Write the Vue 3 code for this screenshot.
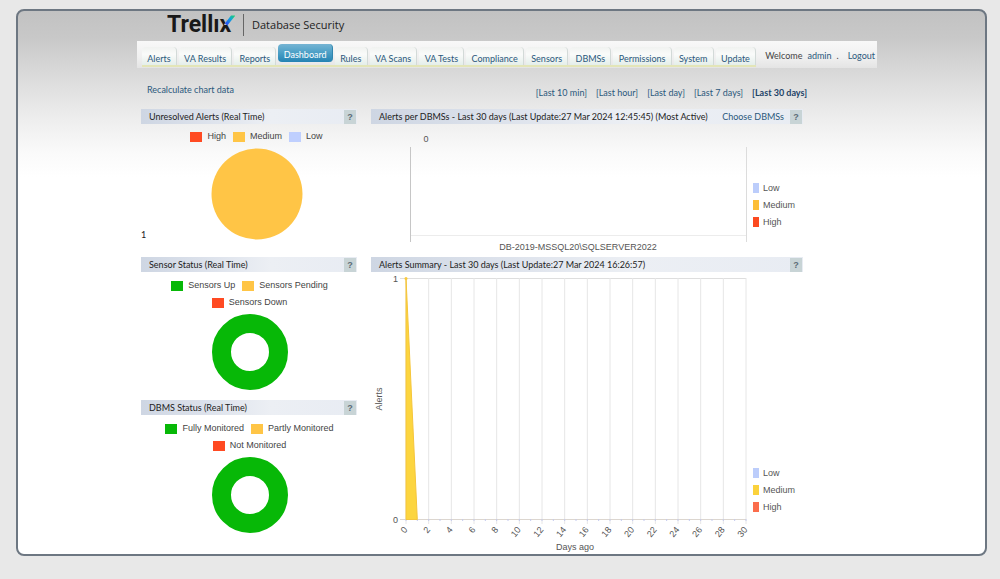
<script setup>
const tabs = ['Alerts', 'VA Results', 'Reports', 'Dashboard', 'Rules', 'VA Scans', 'VA Tests', 'Compliance', 'Sensors', 'DBMSs', 'Permissions', 'System', 'Update']
const ranges = ['Last 10 min', 'Last hour', 'Last day', 'Last 7 days', 'Last 30 days']
const activeTab = 'Dashboard'
const activeRange = 'Last 30 days'

const donuts = [
  {
    title: 'Sensor Status (Real Time)',
    rows: [
      [{ name: 'Sensors Up', tone: 'green' }, { name: 'Sensors Pending', tone: 'amber' }],
      [{ name: 'Sensors Down', tone: 'red' }],
    ],
  },
  {
    title: 'DBMS Status (Real Time)',
    rows: [
      [{ name: 'Fully Monitored', tone: 'green' }, { name: 'Partly Monitored', tone: 'amber' }],
      [{ name: 'Not Monitored', tone: 'red' }],
    ],
  },
]
const severities = [
  { name: 'High', tone: 'red' },
  { name: 'Medium', tone: 'amber' },
  { name: 'Low', tone: 'blue' },
]

// 31 daily ticks, spread between the plot's left and right edges
const days = Array.from({ length: 31 }, (_, day) => ({ day, x: 35 + (day * 34) / 3 }))
const labelled = days.filter((d) => d.day % 2 === 0)
const barLegend = [
  { name: 'Low', fill: '#bccdfb' },
  { name: 'Medium', fill: '#fdbe38' },
  { name: 'High', fill: '#fc4a20' },
]
const areaLegend = [
  { name: 'Low', fill: '#bccdfb' },
  { name: 'Medium', fill: '#fbd23c' },
  { name: 'High', fill: '#fb6d4c' },
]
</script>

<template>
  <div class="page">
    <div class="frame">
      <div class="content">
        <header class="brand">
          <svg class="logo" viewBox="0 0 68 30" role="img" aria-label="Trellix">
            <defs>
              <linearGradient id="arm" x1="0" y1="1" x2="1" y2="0">
                <stop offset="0.2" stop-color="#2457f5" />
                <stop offset="0.6" stop-color="#12a6d8" />
                <stop offset="1" stop-color="#1bd760" />
              </linearGradient>
            </defs>
            <text class="logo-text" x="0" y="22">Trellıx</text>
            <path class="logo-cut" d="M57 15 L60 9 L65 5 L69 5 L69 10 L63 15 Z" />
            <path d="M57.800 13.500 L64 5.500 L68.300 5.500 L60.300 15.500 Z" fill="url(#arm)" />
          </svg>
          <span class="product">Database Security</span>
        </header>

        <div class="bar">
          <nav class="tabs">
            <a v-for="t in tabs" :key="t" href="#" class="tab" :class="{ active: t === activeTab }">{{ t }}</a>
          </nav>
          <div class="user">
            <span>Welcome</span><a href="#">admin</a><span>.</span><a href="#" class="logout">Logout</a>
          </div>
        </div>

        <div class="tools">
          <a href="#" class="recalc">Recalculate chart data</a>
          <div class="ranges">
            <a v-for="r in ranges" :key="r" href="#" :class="{ chosen: r === activeRange }">[{{ r }}]</a>
          </div>
        </div>

        <main class="board">
          <div class="column">
            <section class="panel first">
              <div class="head"><h2>Unresolved Alerts (Real Time)</h2><button type="button" class="help">?</button></div>
              <div class="pie-box">
                <div class="legend-row">
                  <span v-for="s in severities" :key="s.name" class="key"><i class="swatch" :class="s.tone"></i>{{ s.name }}</span>
                </div>
                <svg class="pie" viewBox="0 0 92 92"><circle cx="46" cy="46" r="45.500" fill="#ffc546" /></svg>
              </div>
              <span class="total">1</span>
            </section>
            <section v-for="d in donuts" :key="d.title" class="panel small">
              <div class="head"><h2>{{ d.title }}</h2><button type="button" class="help">?</button></div>
              <div class="donut-box">
                <div v-for="(row, i) in d.rows" :key="i" class="legend-row">
                  <span v-for="s in row" :key="s.name" class="key"><i class="swatch" :class="s.tone"></i>{{ s.name }}</span>
                </div>
                <svg class="donut" viewBox="0 0 76 76"><circle cx="38" cy="38" r="28.500" fill="none" stroke="#07b807" stroke-width="19" /></svg>
              </div>
            </section>
          </div>

          <div class="column">
            <section class="panel first">
              <div class="head">
                <h2>Alerts per DBMSs - Last 30 days (Last Update:27 Mar 2024 12:45:45) (Most Active)</h2>
                <a href="#" class="choose">Choose DBMSs</a>
                <button type="button" class="help">?</button>
              </div>
              <svg class="chart" viewBox="0 0 432 133">
                <path d="M39.500 23V118" stroke="#c6c6c6" />
                <path d="M375.500 23V118" stroke="#dcdcdc" />
                <path d="M40 111.500H375" stroke="#ececec" />
                <text x="55" y="18" text-anchor="middle">0</text>
                <text x="207" y="126" text-anchor="middle">DB-2019-MSSQL20\SQLSERVER2022</text>
                <g v-for="(l, i) in barLegend" :key="l.name">
                  <rect x="382" :y="59 + i * 17" width="6" height="10" :fill="l.fill" />
                  <text x="392" :y="67 + i * 17">{{ l.name }}</text>
                </g>
              </svg>
            </section>
            <section class="panel">
              <div class="head">
                <h2>Alerts Summary - Last 30 days (Last Update:27 Mar 2024 16:26:57)</h2>
                <button type="button" class="help">?</button>
              </div>
              <svg class="chart" viewBox="0 0 432 281">
                <path d="M29 6.500H375" stroke="#dedede" />
                <path v-for="d in labelled" :key="'g' + d.day" :d="`M${d.x} 6V252`" stroke="#e6e6e6" />
                <path d="M29 247.500H375" stroke="#dcd6cf" />
                <path v-for="d in days" :key="'t' + d.day" :d="`M${d.x} 247V249`" stroke="#c3c9ee" />
                <path d="M35 6L35 247.500H46.300Z" fill="#fcd53f" stroke="#f5c53a" stroke-width="1" />
                <circle cx="35" cy="6.500" r="1.500" fill="#f9c93c" />
                <text x="27" y="10" text-anchor="end">1</text>
                <text x="27" y="251" text-anchor="end">0</text>
                <text v-for="d in labelled" :key="'l' + d.day" :transform="`translate(${d.x + 2} 258) rotate(-50)`" text-anchor="end">{{ d.day }}</text>
                <text transform="translate(11 127) rotate(-90)" text-anchor="middle">Alerts</text>
                <text x="204" y="278" text-anchor="middle">Days ago</text>
                <g v-for="(l, i) in areaLegend" :key="l.name">
                  <rect x="382" :y="196 + i * 17" width="6" height="10" :fill="l.fill" />
                  <text x="392" :y="204 + i * 17">{{ l.name }}</text>
                </g>
              </svg>
            </section>
          </div>
        </main>
      </div>
    </div>
  </div>
</template>

<style>
body {
  background: #e8e8e8;
}
</style>

<style scoped>
.page {
  box-sizing: border-box;
  min-height: 100vh;
  padding: 9px 13px 23px 16px;
  font-family: Lato, "Liberation Sans", sans-serif;
  font-size: 9px;
  line-height: 12px;
  color: #444;
}
.frame {
  box-sizing: border-box;
  min-height: 547px;
  border: 2px solid #6d7782;
  border-radius: 8px;
  background: linear-gradient(#c2c2c2 0, #c8c8c8 26px, #dadada 64px, #ececec 104px, #fafafa 142px, #fff 166px);
  display: grid;
  grid-template-columns: 119fr 740fr 108fr;
}
.content {
  grid-column: 2;
}
a {
  color: #2b587c;
  text-decoration: none;
}
.brand {
  display: flex;
  align-items: center;
  height: 28px;
  padding: 0 0 2px 30px;
}
.logo {
  width: 68px;
  height: 30px;
}
.logo-text {
  font: 700 23px Roboto, sans-serif;
  fill: #191919;
}
.logo-cut {
  fill: #c6c6c6;
}
.product {
  margin-left: 8px;
  padding-left: 8px;
  border-left: 1px solid #666;
  font: 400 11px/22px "Open Sans", sans-serif;
  color: #222;
}
.bar {
  display: flex;
  justify-content: space-between;
  height: 27px;
  background: linear-gradient(#f8f8f8, #f0f0f0 60%, #e4e4e4);
}
.tabs {
  display: flex;
  flex: 0 1 83%;
  gap: 2px;
  margin: 3px 0 1px 5px;
  border-bottom: 2px solid #e3e5b8;
}
.tab {
  flex: 1 1 auto;
  margin-top: 3px;
  border-right: 1px solid #d3dad8;
  border-radius: 4px 4px 0 0;
  background: linear-gradient(#f0f2f0, #fafbfa 40%, #e4eeea);
  line-height: 24px;
  height: 18px;
  text-align: center;
}
.tab.active {
  margin-top: 0;
  border-radius: 4px;
  border-right-color: #2f86ae;
  background: linear-gradient(#76b4d3, #4a9fc6 50%, #2483b3);
  color: #fff;
  line-height: 22px;
}
.user {
  display: flex;
  gap: 5px;
  padding-right: 2px;
  line-height: 30px;
}
.logout {
  margin-left: 4px;
}
.tools {
  display: flex;
  justify-content: space-between;
  height: 41px;
  margin-right: 70px;
  padding-left: 10px;
}
.recalc {
  padding-top: 16px;
}
.ranges {
  display: flex;
  gap: 9px;
  padding-top: 19px;
}
.chosen {
  color: #1d4468;
  font-weight: bold;
}
.board {
  display: grid;
  grid-template-columns: 216fr 432fr;
  gap: 14px;
  margin: 0 10% 0 4px;
}
.head {
  display: flex;
  align-items: center;
  gap: 6px;
  height: 15px;
  padding: 0 1px 0 8px;
  background: linear-gradient(90deg, #ced6e3, #dfe4ed 35%, #eceff4 60%, #e8ecf3);
}
.head h2 {
  flex: 1;
  margin: 0;
  font-size: 9px;
  font-weight: normal;
  color: #222;
  white-space: nowrap;
}
.help {
  width: 12px;
  height: 14px;
  padding: 0;
  border: 0;
  background: #c8d4d6;
  font: bold 9px/14px "Liberation Sans", Arial, sans-serif;
  color: #5c6c76;
}
.first {
  position: relative;
  min-height: 148px;
}
.small {
  min-height: 143px;
}
.pie-box,
.donut-box {
  display: flex;
  flex-direction: column;
  align-items: center;
}
.pie-box {
  padding: 4px 0 0 15px;
}
.donut-box {
  padding: 5px 0 0 1px;
}
.legend-row {
  display: flex;
  gap: 7px;
  height: 17px;
  font-family: "Liberation Sans", Arial, sans-serif;
  line-height: 17px;
}
.key {
  display: flex;
  align-items: center;
  gap: 5px;
}
.swatch {
  width: 12px;
  height: 10px;
}
.red { background: #ff4a22; }
.amber { background: #ffc546; }
.blue { background: #bfcffe; }
.green { background: #07b807; }
.pie {
  width: 92px;
  height: 92px;
  margin-top: 3px;
}
.donut {
  width: 76px;
  height: 76px;
  margin-top: 3px;
}
.total {
  position: absolute;
  left: 0;
  bottom: 16px;
  color: #222;
}
.chart {
  display: block;
  width: 100%;
}
.chart text {
  font-family: "Liberation Sans", Arial, sans-serif;
  font-size: 9px;
  fill: #555;
}
</style>
